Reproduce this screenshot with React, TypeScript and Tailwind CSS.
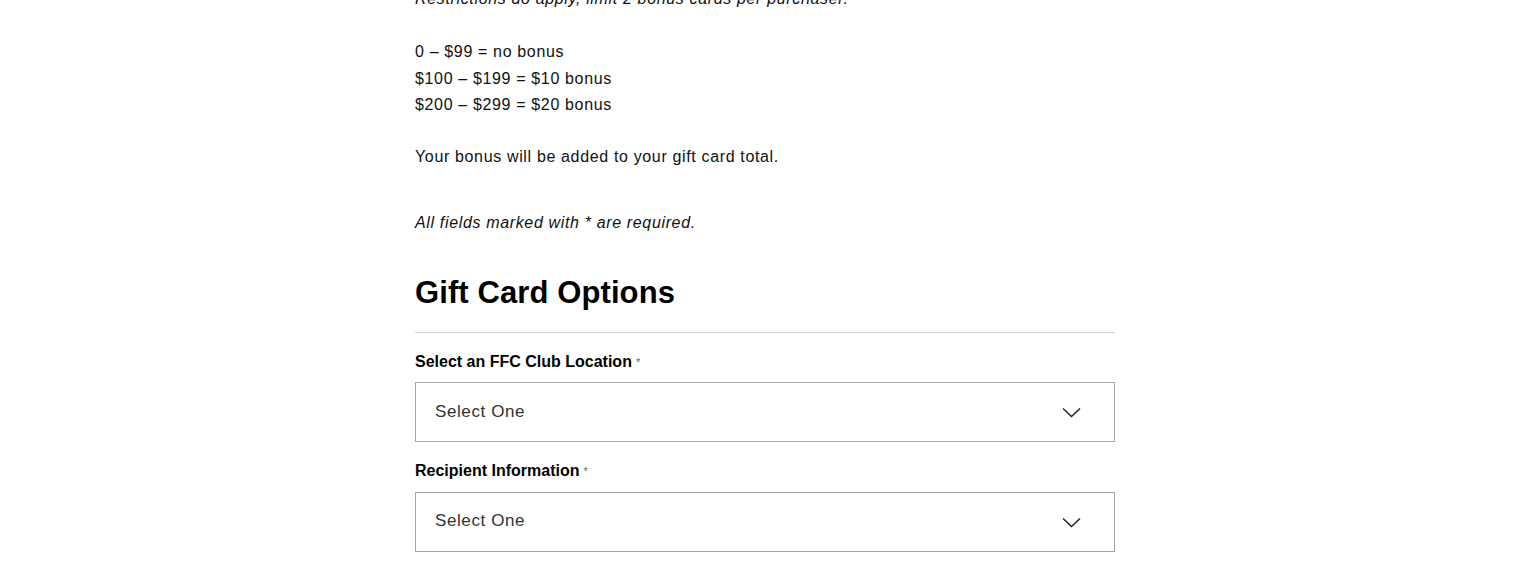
import React from "react";

function SelectField({ label }: { label: string }) {
  return (
    <div className="mt-[18px]">
      <label className="block text-[16px] font-bold leading-[22px] tracking-normal text-black">
        {label}
        <span className="ml-[4px] align-top text-[11px] font-normal text-[#666]">*</span>
      </label>
      <div className="mt-[9.5px] flex h-[60px] items-center justify-between border border-[#a6a6a6] bg-white pl-[19px] pr-[33px]">
        <span className="text-[17px] tracking-[0.6px] text-[#333]">Select One</span>
        <svg width="19" height="11" viewBox="0 0 19 11" fill="none" className="mt-[1px]">
          <path d="M1 1.5 L9.5 9.5 L18 1.5" stroke="#222" strokeWidth="1.5" />
        </svg>
      </div>
    </div>
  );
}

export default function App() {
  return (
    <div className="min-h-screen bg-white">
      <div className="mx-auto -mt-[14px] w-[700px] font-['Liberation_Sans',Arial,sans-serif] text-[16px] leading-[26.5px] tracking-[0.65px] text-[#111]">
        <p className="italic">Restrictions do apply, limit 2 bonus cards per purchaser.</p>
        <p className="mt-[26.5px]">0 – $99 = no bonus</p>
        <p>$100 – $199 = $10 bonus</p>
        <p>$200 – $299 = $20 bonus</p>
        <p className="mt-[25px]">Your bonus will be added to your gift card total.</p>
        <p className="mt-[40px] italic">All fields marked with * are required.</p>

        <h2 className="mt-[36px] text-[31px] font-bold leading-[40px] tracking-[0.1px] text-black">
          Gift Card Options
        </h2>
        <div className="mt-[19px] border-t border-[#d4d4d4]" />

        <SelectField label="Select an FFC Club Location" />
        <SelectField label="Recipient Information" />
      </div>
    </div>
  );
}
